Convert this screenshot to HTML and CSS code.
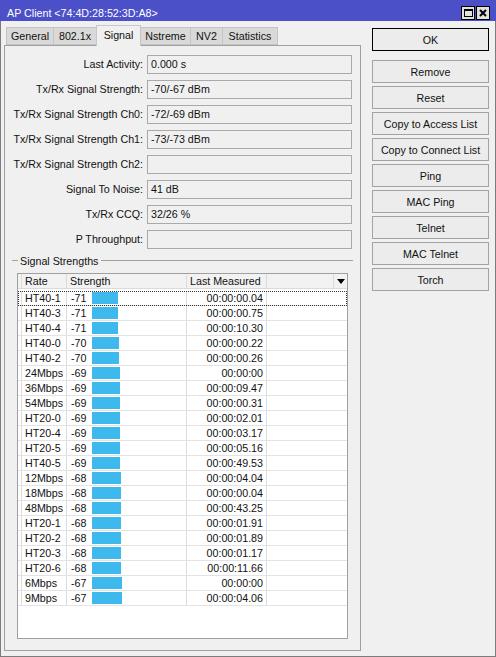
FILE: index.html
```html
<!DOCTYPE html>
<html lang="en">

<head>
    <meta charset="UTF-8">
    <meta name="viewport" content="width=device-width, initial-scale=1.0">
    <title>AP Client</title>
    <link rel="stylesheet" href="styles.css">
</head>

<body>
    <div class="titlebar">
        <span class="title">AP Client &lt;74:4D:28:52:3D:A8&gt;</span>
        <span class="winbtn max"><span class="maxbox"></span></span>
        <span class="winbtn close">
            <svg width="8" height="8" viewBox="0 0 8 8"><path d="M1 1L7 7M7 1L1 7" stroke="#000" stroke-width="2"/></svg>
        </span>
    </div>
    <div class="frame">
        <main class="left">
            <nav class="tabs">
                <div class="tab" style="width:48px">General</div>
                <div class="tab" style="width:44px">802.1x</div>
                <div class="tab active" style="width:45px">Signal</div>
                <div class="tab" style="width:51px">Nstreme</div>
                <div class="tab" style="width:33px">NV2</div>
                <div class="tab" style="width:56px">Statistics</div>
            </nav>
            <section class="panel">
                <div class="row"><label>Last Activity:</label><div class="field">0.000 s</div></div>
                <div class="row"><label>Tx/Rx Signal Strength:</label><div class="field">-70/-67 dBm</div></div>
                <div class="row"><label>Tx/Rx Signal Strength Ch0:</label><div class="field">-72/-69 dBm</div></div>
                <div class="row"><label>Tx/Rx Signal Strength Ch1:</label><div class="field">-73/-73 dBm</div></div>
                <div class="row"><label>Tx/Rx Signal Strength Ch2:</label><div class="field"></div></div>
                <div class="row"><label>Signal To Noise:</label><div class="field">41 dB</div></div>
                <div class="row"><label>Tx/Rx CCQ:</label><div class="field">32/26 %</div></div>
                <div class="row"><label>P Throughput:</label><div class="field"></div></div>

                <div class="group">
                    <span class="line short"></span>
                    <span class="group-title">Signal Strengths</span>
                    <span class="line"></span>
                </div>

                <div class="list">
                    <div class="list-head">
                        <div class="c0"></div>
                        <div class="c-rate">Rate</div>
                        <div class="c-str">Strength</div>
                        <div class="c-last">Last Measured</div>
                        <div class="c-blank"></div>
                        <div class="c-arrow"><span class="arrow"></span></div>
                    </div>
                    <div class="list-body" id="rows"></div>
                </div>
            </section>
        </main>
        <aside class="side">
            <button class="btn ok">OK</button>
            <button class="btn first">Remove</button>
            <button class="btn">Reset</button>
            <button class="btn">Copy to Access List</button>
            <button class="btn">Copy to Connect List</button>
            <button class="btn">Ping</button>
            <button class="btn">MAC Ping</button>
            <button class="btn">Telnet</button>
            <button class="btn">MAC Telnet</button>
            <button class="btn">Torch</button>
        </aside>
    </div>

    <script>
        var data = [
            ['HT40-1', -71, '00:00:00.04'],
            ['HT40-3', -71, '00:00:00.75'],
            ['HT40-4', -71, '00:00:10.30'],
            ['HT40-0', -70, '00:00:00.22'],
            ['HT40-2', -70, '00:00:00.26'],
            ['24Mbps', -69, '00:00:00'],
            ['36Mbps', -69, '00:00:09.47'],
            ['54Mbps', -69, '00:00:00.31'],
            ['HT20-0', -69, '00:00:02.01'],
            ['HT20-4', -69, '00:00:03.17'],
            ['HT20-5', -69, '00:00:05.16'],
            ['HT40-5', -69, '00:00:49.53'],
            ['12Mbps', -68, '00:00:04.04'],
            ['18Mbps', -68, '00:00:00.04'],
            ['48Mbps', -68, '00:00:43.25'],
            ['HT20-1', -68, '00:00:01.91'],
            ['HT20-2', -68, '00:00:01.89'],
            ['HT20-3', -68, '00:00:01.17'],
            ['HT20-6', -68, '00:00:11.66'],
            ['6Mbps', -67, '00:00:00'],
            ['9Mbps', -67, '00:00:04.06']
        ];
        var html = '';
        for (var i = 0; i < data.length; i++) {
            var d = data[i];
            var w = 26 + (71 + d[1]); //bar grows 1px per dBm
            html += '<div class="list-row' + (i == 0 ? ' focus' : '') + '">' +
                '<div class="c0"></div>' +
                '<div class="c-rate">' + d[0] + '</div>' +
                '<div class="c-str"><span class="num">' + d[1] + '</span><span class="bar" style="width:' + w + 'px"></span></div>' +
                '<div class="c-last">' + d[2] + '</div>' +
                '<div class="c-rest"></div>' +
                '</div>';
        }
        document.getElementById('rows').innerHTML = html;
    </script>
</body>

</html>
```

FILE: styles.css
```css
* {
    box-sizing: border-box;
}

body {
    margin: 0;
    width: 496px;
    height: 657px;
    background: #f0f0f0;
    font-family: 'Liberation Sans', Arial, sans-serif;
    font-size: 10.7px;
    color: #111;
    overflow: hidden;
}

.titlebar {
    height: 21px;
    background: #4b50c9;
    color: #fff;
    display: flex;
    align-items: center;
    padding: 4px 6px 0 7px;
}

.title {
    flex: 1;
}

.winbtn {
    width: 14px;
    height: 14px;
    border: 1px solid #000;
    background: #e0e0e0;
    margin-left: 1px;
    display: flex;
    align-items: center;
    justify-content: center;
}

.maxbox {
    width: 9px;
    height: 8px;
    border: 1px solid #000;
    border-top-width: 2px;
}

.frame {
    height: 636px;
    border: 1px solid #7c7c7c;
    border-top: none;
    display: flex;
    padding: 4px 0 0 3px;
}

.left {
    width: 357px;
}

/* tabs */
.tabs {
    display: flex;
    align-items: flex-end;
    height: 21px;
    padding-left: 2px;
    position: relative;
    z-index: 1;
}

.tab {
    height: 18px;
    margin-left: -1px;
    margin-bottom: 1px;
    border: 1px solid #c4c4c4;
    background: #d9d9d9;
    text-align: center;
    line-height: 16px;
}

.tab:first-child {
    margin-left: 0;
}

.tab.active {
    height: 21px;
    margin-bottom: 0;
    border-color: #c8c8c8;
    border-bottom: none;
    background: #f0f0f0;
    line-height: 19px;
}

.panel {
    height: 606px;
    margin-top: -1px;
    border: 1px solid #a0a0a0;
    padding: 9px 0 0 0;
}

/* form */
.row {
    display: flex;
    height: 19px;
    margin-bottom: 6px;
}

.row label {
    width: 138px;
    text-align: right;
    line-height: 19px;
    margin-right: 4px;
}

.field {
    width: 205px;
    height: 19px;
    border: 1px solid #a9a9a9;
    padding-left: 3px;
    line-height: 17px;
}

/* group box */
.group {
    display: flex;
    align-items: center;
    height: 13px;
    margin-top: -1px;
    padding: 0 7px;
}

.line {
    flex: 1;
    height: 1px;
    background: #a0a0a0;
}

.line.short {
    flex: none;
    width: 6px;
}

.group-title {
    padding: 0 3px 0 2px;
}

/* list */
.list {
    width: 331px;
    height: 366px;
    margin: 6px 0 0 12px;
    border: 1px solid #a0a0a0;
    background: #fff;
}

.list-head {
    display: flex;
    height: 15px;
    background: #f2f2f2;
    border-bottom: 1px solid #dadada;
    line-height: 14px;
}

.list-head > div,
.list-row > div {
    border-right: 1px solid #dcdcdc;
    white-space: nowrap;
}

.c0 {
    width: 4px;
}

.c-rate {
    width: 45px;
    padding-left: 3px;
}

.c-str {
    width: 120px;
    padding-left: 3px;
}

.list-row .c-str {
    padding-left: 4px;
    display: flex;
    align-items: center;
}

.c-last {
    width: 80px;
    padding-left: 3px;
}

.list-row .c-last {
    text-align: right;
    padding-right: 3px;
}

.c-blank {
    width: 67px;
}

.list-head .c-arrow {
    flex: 1;
    border-right: none;
    display: flex;
    align-items: center;
    justify-content: center;
}

.arrow {
    width: 0;
    height: 0;
    border-left: 4px solid transparent;
    border-right: 4px solid transparent;
    border-top: 5px solid #000;
}

.list-body {
    padding-top: 2px;
}

.list-row {
    display: flex;
    height: 15px;
    border-bottom: 1px solid #e3e3e3;
    line-height: 14px;
}

.list-row.focus {
    outline: 1px dotted #333;
    outline-offset: -1px;
}

.list-row .c-rest {
    flex: 1;
    border-right: none;
}

.num {
    width: 21px;
}

.bar {
    height: 12px;
    background: #3db9ee;
}

/* buttons */
.side {
    width: 117px;
    margin-left: 11px;
    padding-top: 3px;
    display: flex;
    flex-direction: column;
}

.btn {
    height: 23px;
    margin-bottom: 3px;
    border: 1px solid #a3a3a3;
    background: #ececec;
    font-family: 'Liberation Sans', Arial, sans-serif;
    font-size: 10.7px;
    color: #111;
    padding: 0;
}

.btn.ok {
    border-color: #000;
    margin-bottom: 9px;
}
```
